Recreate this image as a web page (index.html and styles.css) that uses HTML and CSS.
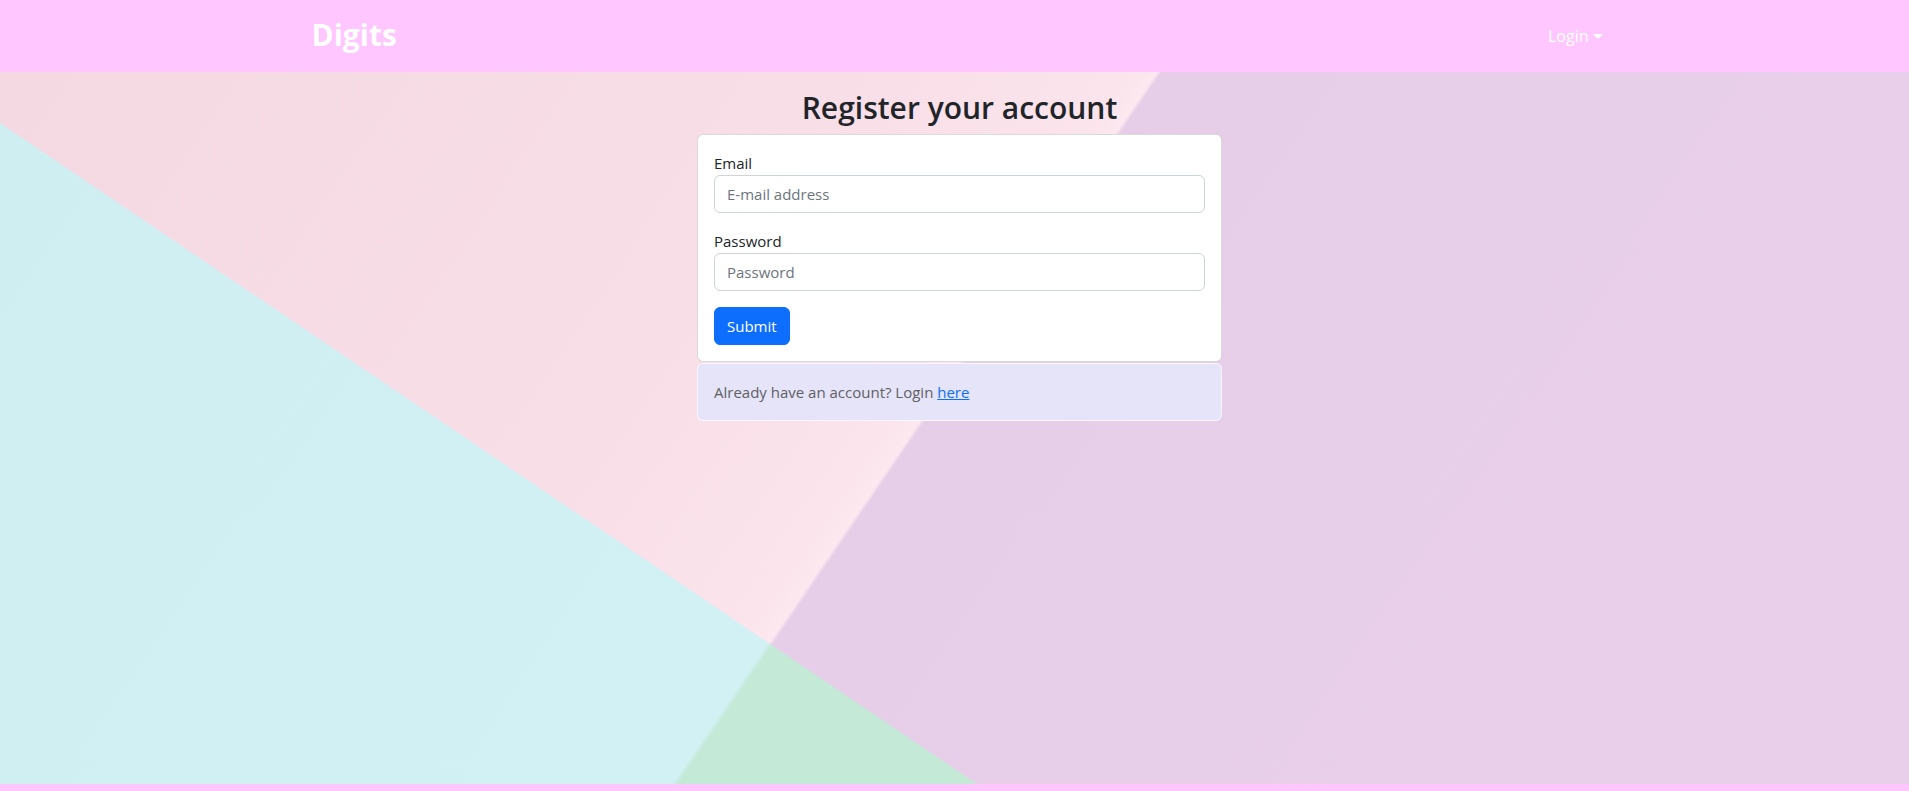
FILE: index.html
```html
<!DOCTYPE html>
<html lang="en">
<head>
<meta charset="utf-8">
<title>Digits - Register</title>
<link rel="stylesheet" href="styles.css">
</head>
<body>
<nav class="navbar">
  <div class="container nav-inner">
    <a class="brand" href="#">Digits</a>
    <a class="nav-link dropdown-toggle" href="#">Login</a>
  </div>
</nav>
<main class="hero">
  <div class="container hero-inner">
    <div class="column">
      <h2 class="title">Register your account</h2>
      <form class="card">
        <div class="field">
          <label class="label" for="email">Email</label>
          <input class="input" id="email" type="email" placeholder="E-mail address">
        </div>
        <div class="field">
          <label class="label" for="password">Password</label>
          <input class="input" id="password" type="password" placeholder="Password">
        </div>
        <button class="btn" type="button">Submit</button>
      </form>
      <div class="card message">Already have an account? Login <a class="link" href="#">here</a></div>
    </div>
  </div>
</main>
<footer class="footer"></footer>
</body>
</html>
```
FILE: styles.css
```css
* { box-sizing: border-box; }
html, body { margin: 0; padding: 0; }
body {
  font-family: "Open Sans", "Noto Sans", sans-serif;
  font-size: 16px;
  line-height: 1.5;
  color: #212529;
  background: #ffc6ff;
}
.container {
  width: 1296px;
  margin-left: calc(50% - 643px);
}
.navbar {
  background: #ffc6ff;
  height: 72px;
}
.nav-inner {
  height: 72px;
  display: flex;
  align-items: center;
  justify-content: space-between;
}
.brand {
  color: #fff;
  font-size: 30px;
  font-weight: 700;
  text-decoration: none;
  line-height: 1;
  margin-top: -3px;
}
.nav-link {
  color: #fff;
  text-decoration: none;
  font-size: 16px;
  padding: 8px 5px 8px 8px;
  display: flex;
  align-items: center;
}
.dropdown-toggle::after {
  content: "";
  display: inline-block;
  margin-left: 4px;
  border-top: 5px solid #fff;
  border-left: 5px solid transparent;
  border-right: 5px solid transparent;
  margin-top: 1px;
}
.hero {
  position: relative;
  height: 712px;
  overflow: hidden;
  background: linear-gradient(124.2deg, #f4d9e3 0px, #f8dee7 700px, #fbe4ec 930px, #fde8ef 957px, #e6cde8 961px, #e8cfe9 1300px, #eacfea 1979px);
}
.hero::before {
  content: "";
  position: absolute;
  inset: 0;
  background: linear-gradient(124.2deg, #cfeef2 0px, #d2f1f4 956px, #c4e9d6 961px, #c3e8d5 1979px);
  clip-path: polygon(0 51px, 977px 712px, 0 712px);
}
.hero-inner {
  position: relative;
  z-index: 1;
  display: flex;
  justify-content: center;
  padding-top: 17px;
}
.column {
  width: 525px;
}
.title {
  margin: 0 0 8px;
  font-size: 30px;
  font-weight: 600;
  line-height: 37px;
  text-align: center;
  color: #212529;
}
.card {
  display: block;
  background: #fff;
  border: 1px solid rgba(0, 0, 0, 0.15);
  border-radius: 6px;
  padding: 16px;
  margin: 0;
}
.field {
  margin-bottom: 16px;
}
.label {
  display: block;
  font-size: 15px;
  line-height: 24px;
}
.input {
  display: block;
  width: 100%;
  height: 38px;
  padding: 6px 12px;
  font-family: inherit;
  font-size: 15px;
  line-height: 24px;
  color: #212529;
  background: #fff;
  border: 1px solid #ced4da;
  border-radius: 6px;
}
.input::placeholder {
  color: #6c757d;
}
.btn {
  display: block;
  height: 38px;
  padding: 6px 12px;
  font-family: inherit;
  font-size: 15px;
  line-height: 24px;
  color: #fff;
  background: #0d6efd;
  border: 1px solid #0d6efd;
  border-radius: 6px;
}
.message {
  margin-top: 1px;
  padding: 16px;
  background: #e5e4f8;
  border-color: rgba(255, 255, 255, 0.7);
  color: #5f5f66;
  font-size: 15px;
  line-height: 24px;
}
.link {
  color: #0d6efd;
  text-decoration: underline;
}
.footer {
  height: 40px;
  background: #ffc6ff;
}
```
